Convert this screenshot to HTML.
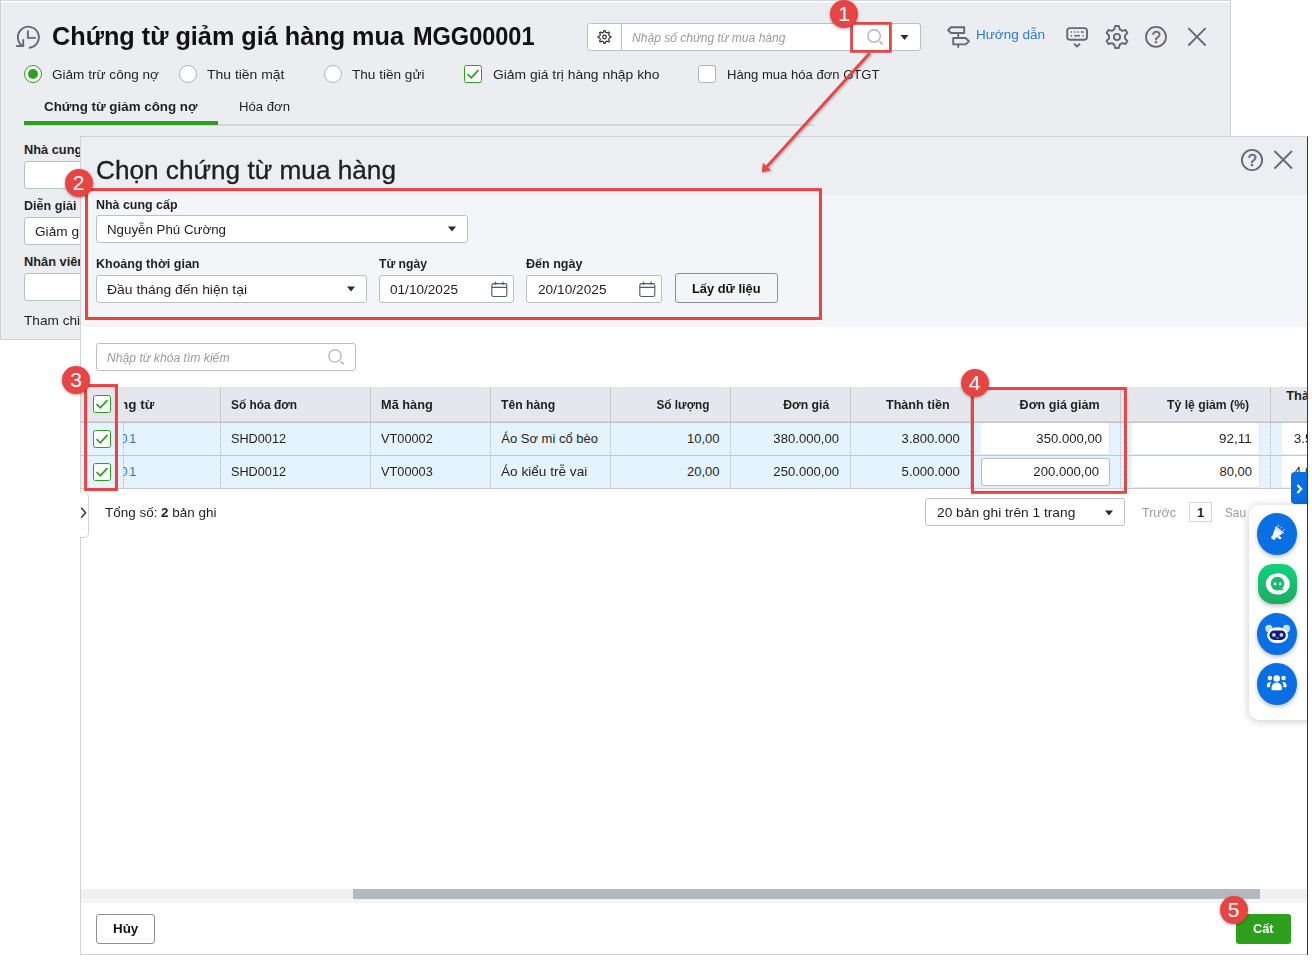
<!DOCTYPE html>
<html lang="vi"><head><meta charset="utf-8"><title>Chọn chứng từ mua hàng</title>
<style>
html,body{margin:0;padding:0;background:#fff;}
body{position:relative;width:1312px;height:961px;overflow:hidden;font-family:"Liberation Sans",sans-serif;}
.t{position:absolute;white-space:nowrap;line-height:20px;}
.b{position:absolute;box-sizing:border-box;}
svg{position:absolute;left:0;top:0;overflow:visible;}
</style></head><body>

<div class="b" style="left:0px;top:0px;width:1231px;height:340px;background:#ecedf1;border:1px solid #d0d1d4;border-top-color:#d8d8da;"></div>
<div class="b" style="left:1px;top:1px;width:1229px;height:1px;background:#fff;"></div>
<div class="b" style="left:1px;top:2px;width:1229px;height:1px;background:#f5f5f7;"></div>
<span class="t" id="title" style="top:26.49px;font-size:26px;font-weight:700;color:#111;transform:scaleX(0.9706);left:52.00px;transform-origin:0 50%;">Chứng từ giảm giá hàng mua</span>
<span class="t" id="title2" style="top:26.49px;font-size:26px;font-weight:700;color:#111;transform:scaleX(0.9040);left:413.00px;transform-origin:0 50%;">MGG00001</span>
<div class="b" style="left:24px;top:64.5px;width:18px;height:18px;border-radius:50%;background:#fff;border:1px solid #2ca01c;"><div class="b" style="left:3px;top:3px;width:10px;height:10px;border-radius:50%;background:#2ca01c;"></div></div>
<div class="b" style="left:179px;top:64.5px;width:18px;height:18px;border-radius:50%;background:#fff;border:1px solid #afb2b8;"></div>
<div class="b" style="left:324px;top:64.5px;width:18px;height:18px;border-radius:50%;background:#fff;border:1px solid #afb2b8;"></div>
<span class="t" id="r1" style="top:64.50px;font-size:13px;font-weight:400;color:#1f1f1f;transform:scaleX(1.0441);left:52.00px;transform-origin:0 50%;">Giảm trừ công nợ</span>
<span class="t" id="r2" style="top:64.50px;font-size:13px;font-weight:400;color:#1f1f1f;transform:scaleX(1.0724);left:207.00px;transform-origin:0 50%;">Thu tiền mặt</span>
<span class="t" id="r3" style="top:64.50px;font-size:13px;font-weight:400;color:#1f1f1f;transform:scaleX(1.0446);left:352.00px;transform-origin:0 50%;">Thu tiền gửi</span>
<div class="b" style="left:464px;top:65px;width:18px;height:18px;background:#fff;border:1px solid #2ca01c;border-radius:2.5px;"><svg width="18" height="18" viewBox="0 0 18 18" style="left:-1px;top:-1px"><path d="M3.6 9.2 L7.3 12.8 L14.4 5.2" fill="none" stroke="#2ca01c" stroke-width="1.8"/></svg></div>
<span class="t" id="c1" style="top:64.50px;font-size:13px;font-weight:400;color:#1f1f1f;transform:scaleX(1.0666);left:492.50px;transform-origin:0 50%;">Giảm giá trị hàng nhập kho</span>
<div class="b" style="left:698px;top:65px;width:18px;height:18px;background:#fff;border:1px solid #afb2b8;border-radius:3px;"></div>
<span class="t" id="c2" style="top:64.50px;font-size:13px;font-weight:400;color:#1f1f1f;transform:scaleX(1.0059);left:726.75px;transform-origin:0 50%;">Hàng mua hóa đơn GTGT</span>
<div class="b" style="left:24px;top:124px;width:790px;height:2px;background:#d2d5da;"></div>
<div class="b" style="left:24px;top:121px;width:194px;height:4px;background:#2ca01c;"></div>
<span class="t" id="tab1" style="top:96.76px;font-size:12.8px;font-weight:700;color:#1f1f1f;transform:scaleX(1.0438);left:44.00px;transform-origin:0 50%;">Chứng từ giảm công nợ</span>
<span class="t" id="tab2" style="top:96.70px;font-size:13px;font-weight:400;color:#1f1f1f;transform:scaleX(1.0108);left:239.00px;transform-origin:0 50%;">Hóa đơn</span>
<span class="t" id="f1" style="top:139.56px;font-size:12.8px;font-weight:700;color:#1f1f1f;left:24.00px;transform-origin:0 50%;">Nhà cung cấp</span>
<div class="b" style="left:24px;top:161px;width:300px;height:28px;background:#fff;border:1px solid #babec5;border-radius:3px;"></div>
<span class="t" id="f2" style="top:195.56px;font-size:12.8px;font-weight:700;color:#1f1f1f;transform:scaleX(0.9842);left:24.00px;transform-origin:0 50%;">Diễn giải</span>
<div class="b" style="left:24px;top:217px;width:300px;height:28px;background:#fff;border:1px solid #babec5;border-radius:3px;"></div>
<span class="t" id="f2v" style="top:221.80px;font-size:13px;font-weight:400;color:#1f1f1f;left:35.00px;transform-origin:0 50%;transform:scaleX(1.05);">Giảm giá hàng mua</span>
<span class="t" id="f3" style="top:251.56px;font-size:12.8px;font-weight:700;color:#1f1f1f;left:24.00px;transform-origin:0 50%;">Nhân viên mua hàng</span>
<div class="b" style="left:24px;top:273px;width:300px;height:28px;background:#fff;border:1px solid #babec5;border-radius:3px;"></div>
<span class="t" id="f4" style="top:310.50px;font-size:13px;font-weight:400;color:#1f1f1f;left:24.00px;transform-origin:0 50%;transform:scaleX(1.05);">Tham chiếu</span>
<div class="b" style="left:587px;top:23px;width:35px;height:28px;background:#fff;border:1px solid #babec5;border-radius:3px 0 0 3px;"></div>
<div class="b" style="left:621px;top:23px;width:300px;height:28px;background:#fff;border:1px solid #babec5;border-radius:0 3px 3px 0;"></div>
<span class="t" id="ph1" style="top:28.04px;font-size:12.3px;font-weight:400;color:#9b9b9e;transform:scaleX(0.9813);font-style:italic;left:632.00px;transform-origin:0 50%;">Nhập số chứng từ mua hàng</span>
<span class="t" id="hd" style="top:25.00px;font-size:13px;font-weight:400;color:#2b7cd0;transform:scaleX(1.0393);left:976.00px;transform-origin:0 50%;">Hướng dẫn</span>
<svg width="1312" height="340" viewBox="0 0 1312 340" fill="none" stroke="#66696f" stroke-width="1.7">
<g stroke-width="1.9"><path d="M28.9 47.7 A10.5 10.5 0 1 0 22.6 46"/><path d="M16.2 46 H23.2 V39.2"/><path d="M27.9 30.4 V37.9 H35.8"/></g>
<path d="M603.43 32.22 L603.94 30.52 L605.06 30.52 L605.57 32.22 L607.13 32.86 L608.68 32.02 L609.48 32.82 L608.64 34.37 L609.28 35.93 L610.98 36.44 L610.98 37.56 L609.28 38.07 L608.64 39.63 L609.48 41.18 L608.68 41.98 L607.13 41.14 L605.57 41.78 L605.06 43.48 L603.94 43.48 L603.43 41.78 L601.87 41.14 L600.32 41.98 L599.52 41.18 L600.36 39.63 L599.72 38.07 L598.02 37.56 L598.02 36.44 L599.72 35.93 L600.36 34.37 L599.52 32.82 L600.32 32.02 L601.87 32.86Z" stroke="#2e2e2e" stroke-width="1.15" stroke-linejoin="round"/><circle cx="604.5" cy="37" r="1.8" stroke="#2e2e2e" stroke-width="1.2"/>
<circle cx="874.1" cy="35.9" r="6.25" stroke="#bcbcbe" stroke-width="1.6"/><path d="M879.5 41.5 L882.7 44.4" stroke="#bcbcbe" stroke-width="1.9"/>
<path d="M900.5 35 H908.5 L904.5 40Z" fill="#2b2b2b" stroke="none"/>
<g stroke-width="1.9" stroke-linejoin="round"><path d="M951 27.2 H964.2 V33 H951 L948 30.1 Z"/><path d="M953.2 38 H965.6 L969 41.2 L965.6 44.4 H953.2 Z"/><path d="M958.2 33 V38 M958.2 44.4 V47.8"/></g>
<g stroke-width="1.9"><rect x="1067.2" y="28.1" width="19.8" height="11.6" rx="2.6"/><path d="M1070.6 32 h1.5 M1074 32 h1.5 M1077.4 32 h1.5 M1080.8 32 h1.5 M1082.3 32 h1.5 M1070.6 35.8 h1.5 M1074.2 35.8 h5.8 M1082.3 35.8 h1.5" stroke-width="1.6"/><path d="M1074 43.7 L1077 46.4 L1080 43.7"/></g>
<path d="M1114.30 29.36 L1115.21 26.05 L1118.79 26.05 L1119.70 29.36 L1122.26 30.84 L1125.59 29.97 L1127.38 33.08 L1124.96 35.52 L1124.96 38.48 L1127.38 40.92 L1125.59 44.03 L1122.26 43.16 L1119.70 44.64 L1118.79 47.95 L1115.21 47.95 L1114.30 44.64 L1111.74 43.16 L1108.41 44.03 L1106.62 40.92 L1109.04 38.48 L1109.04 35.52 L1106.62 33.08 L1108.41 29.97 L1111.74 30.84Z" stroke-width="1.9" stroke-linejoin="round"/><circle cx="1117" cy="37" r="3.1" stroke-width="1.9"/>
<circle cx="1156" cy="36.9" r="10" stroke-width="1.8"/>
<path d="M1188.3 28.2 L1205.6 45.5 M1205.6 28.2 L1188.3 45.5" stroke-width="1.8"/>
</svg>
<span class="t" id="q1" style="top:27.66px;font-size:16px;font-weight:400;color:#66696f;left:1056.10px;width:200px;text-align:center;-webkit-text-stroke:0.5px #66696f;">?</span>
<div class="b" style="left:80px;top:136px;width:1228px;height:819px;background:#fff;border:1px solid #d2d3d6;border-right:1.5px solid #33363f;"></div>
<div class="b" style="left:81px;top:137px;width:1225.5px;height:58px;background:#edeef2;"></div>
<div class="b" style="left:81px;top:194.5px;width:1225.5px;height:132.5px;background:#f4f5f8;"></div>
<span class="t" id="dt" style="top:159.94px;font-size:25px;font-weight:400;color:#1f1f1f;transform:scaleX(1.0473);left:96.00px;transform-origin:0 50%;-webkit-text-stroke:0.3px #1f1f1f;">Chọn chứng từ mua hàng</span>
<svg width="1312" height="340" viewBox="0 0 1312 340" fill="none" stroke="#66696f" stroke-width="1.7">
<circle cx="1252" cy="160" r="10.1" stroke-width="1.9"/><path d="M1274.5 151 L1292 168.5 M1292 151 L1274.5 168.5" stroke-width="1.8"/>
</svg>
<span class="t" id="q2" style="top:150.76px;font-size:16px;font-weight:400;color:#66696f;left:1152.10px;width:200px;text-align:center;-webkit-text-stroke:0.5px #66696f;">?</span>
<span class="t" id="l1" style="top:194.56px;font-size:12.8px;font-weight:700;color:#1f1f1f;transform:scaleX(0.9713);left:96.00px;transform-origin:0 50%;">Nhà cung cấp</span>
<div class="b" style="left:96px;top:215px;width:372px;height:28px;background:#fff;border:1px solid #babec5;border-radius:3px;"></div>
<span class="t" id="v1" style="top:220.00px;font-size:13px;font-weight:400;color:#1f1f1f;transform:scaleX(1.0237);left:107.00px;transform-origin:0 50%;">Nguyễn Phú Cường</span>
<svg width="10" height="6" viewBox="0 0 10 6" style="left:447px;top:226.3px"><path d="M1 0.5 H9 L5 5.5Z" fill="#2b2b2b"/></svg>
<span class="t" id="l2" style="top:254.06px;font-size:12.8px;font-weight:700;color:#1f1f1f;transform:scaleX(0.9784);left:96.00px;transform-origin:0 50%;">Khoảng thời gian</span>
<div class="b" style="left:96px;top:275px;width:271px;height:28px;background:#fff;border:1px solid #babec5;border-radius:3px;"></div>
<span class="t" id="v2" style="top:280.00px;font-size:13px;font-weight:400;color:#1f1f1f;transform:scaleX(1.0701);left:107.00px;transform-origin:0 50%;">Đầu tháng đến hiện tại</span>
<svg width="10" height="6" viewBox="0 0 10 6" style="left:346px;top:286.3px"><path d="M1 0.5 H9 L5 5.5Z" fill="#2b2b2b"/></svg>
<span class="t" id="l3" style="top:254.06px;font-size:12.8px;font-weight:700;color:#1f1f1f;transform:scaleX(0.9502);left:379.00px;transform-origin:0 50%;">Từ ngày</span>
<div class="b" style="left:379px;top:275px;width:135px;height:28px;background:#fff;border:1px solid #babec5;border-radius:3px;"></div>
<span class="t" id="v3" style="top:279.70px;font-size:13px;font-weight:400;color:#1f1f1f;transform:scaleX(1.0449);left:390.00px;transform-origin:0 50%;">01/10/2025</span>
<svg width="17" height="17" viewBox="0 0 17 17" style="left:490.5px;top:280.5px" fill="none" stroke="#55585e" stroke-width="1.1"><rect x="0.8" y="2.6" width="15" height="12.9" rx="1.8"/><path d="M0.8 6.4 H15.8 M4.6 0.6 V4 M12 0.6 V4"/></svg>
<span class="t" id="l4" style="top:254.06px;font-size:12.8px;font-weight:700;color:#1f1f1f;transform:scaleX(0.9807);left:526.00px;transform-origin:0 50%;">Đến ngày</span>
<div class="b" style="left:526px;top:275px;width:136px;height:28px;background:#fff;border:1px solid #babec5;border-radius:3px;"></div>
<span class="t" id="v4" style="top:279.70px;font-size:13px;font-weight:400;color:#1f1f1f;transform:scaleX(1.0526);left:537.50px;transform-origin:0 50%;">20/10/2025</span>
<svg width="17" height="17" viewBox="0 0 17 17" style="left:638.5px;top:280.5px" fill="none" stroke="#55585e" stroke-width="1.1"><rect x="0.8" y="2.6" width="15" height="12.9" rx="1.8"/><path d="M0.8 6.4 H15.8 M4.6 0.6 V4 M12 0.6 V4"/></svg>
<div class="b" style="left:675px;top:273px;width:103px;height:30px;background:#f4f5f8;border:1px solid #8d9096;border-radius:3px;"></div>
<span class="t" id="b1" style="top:278.56px;font-size:12.8px;font-weight:700;color:#111;transform:scaleX(1.0030);left:692.00px;transform-origin:0 50%;">Lấy dữ liệu</span>
<div class="b" style="left:96px;top:343px;width:260px;height:28px;background:#fff;border:1px solid #babec5;border-radius:3px;"></div>
<span class="t" id="ph2" style="top:347.84px;font-size:12px;font-weight:400;color:#9b9b9e;transform:scaleX(1.0125);font-style:italic;left:107.00px;transform-origin:0 50%;">Nhập từ khóa tìm kiếm</span>
<svg width="30" height="30" viewBox="0 0 30 30" style="left:321px;top:342px" fill="none" stroke="#c0c0c2" stroke-width="1.6"><circle cx="14" cy="13.9" r="6.15"/><path d="M19.5 19.4 L22.8 22.3" stroke-width="2"/></svg>
<div class="b" style="left:81px;top:387px;width:1225.5px;height:34px;background:#e5e7ec;"></div>
<div class="b" style="left:81px;top:421px;width:1225.5px;height:1px;background:#d2d2d5;"></div>
<div class="b" style="left:81px;top:422px;width:1225.5px;height:1px;background:#c4c3c3;"></div>
<div class="b" style="left:81px;top:423px;width:1225.5px;height:32px;background:#e5f3ff;"></div>
<div class="b" style="left:81px;top:455px;width:1225.5px;height:1px;background:#c5c6c8;"></div>
<div class="b" style="left:81px;top:456px;width:1225.5px;height:32px;background:#e5f3ff;"></div>
<div class="b" style="left:81px;top:488px;width:1225.5px;height:1px;background:#c9c9cb;"></div>
<div class="b" style="left:220px;top:387px;width:1px;height:35px;background:#c7c8ca;"></div>
<div class="b" style="left:220px;top:423px;width:0px;height:65px;border-left:1px dotted #b4b5b8;"></div>
<div class="b" style="left:370px;top:387px;width:1px;height:35px;background:#c7c8ca;"></div>
<div class="b" style="left:370px;top:423px;width:0px;height:65px;border-left:1px dotted #b4b5b8;"></div>
<div class="b" style="left:490px;top:387px;width:1px;height:35px;background:#c7c8ca;"></div>
<div class="b" style="left:490px;top:423px;width:0px;height:65px;border-left:1px dotted #b4b5b8;"></div>
<div class="b" style="left:610px;top:387px;width:1px;height:35px;background:#c7c8ca;"></div>
<div class="b" style="left:610px;top:423px;width:0px;height:65px;border-left:1px dotted #b4b5b8;"></div>
<div class="b" style="left:730px;top:387px;width:1px;height:35px;background:#c7c8ca;"></div>
<div class="b" style="left:730px;top:423px;width:0px;height:65px;border-left:1px dotted #b4b5b8;"></div>
<div class="b" style="left:850px;top:387px;width:1px;height:35px;background:#c7c8ca;"></div>
<div class="b" style="left:850px;top:423px;width:0px;height:65px;border-left:1px dotted #b4b5b8;"></div>
<div class="b" style="left:970px;top:387px;width:1px;height:35px;background:#c7c8ca;"></div>
<div class="b" style="left:970px;top:423px;width:0px;height:65px;border-left:1px dotted #b4b5b8;"></div>
<div class="b" style="left:1120px;top:387px;width:1px;height:35px;background:#c7c8ca;"></div>
<div class="b" style="left:1120px;top:423px;width:0px;height:65px;border-left:1px dotted #b4b5b8;"></div>
<div class="b" style="left:1270px;top:387px;width:1px;height:35px;background:#c7c8ca;"></div>
<div class="b" style="left:1270px;top:423px;width:0px;height:65px;border-left:1px dotted #b4b5b8;"></div>
<div class="b" style="left:123px;top:423px;width:0px;height:65px;border-left:1px dotted #b4b5b8;"></div>
<div class="b" style="left:93px;top:395px;width:18px;height:18px;background:#fff;border:1px solid #2ca01c;border-radius:2.5px;"><svg width="18" height="18" viewBox="0 0 18 18" style="left:-1px;top:-1px"><path d="M3.6 9.2 L7.3 12.8 L14.4 5.2" fill="none" stroke="#2ca01c" stroke-width="1.8"/></svg></div>
<div class="b" style="left:93px;top:430px;width:18px;height:18px;background:#fff;border:1px solid #2ca01c;border-radius:2.5px;"><svg width="18" height="18" viewBox="0 0 18 18" style="left:-1px;top:-1px"><path d="M3.6 9.2 L7.3 12.8 L14.4 5.2" fill="none" stroke="#2ca01c" stroke-width="1.8"/></svg></div>
<div class="b" style="left:93px;top:463px;width:18px;height:18px;background:#fff;border:1px solid #2ca01c;border-radius:2.5px;"><svg width="18" height="18" viewBox="0 0 18 18" style="left:-1px;top:-1px"><path d="M3.6 9.2 L7.3 12.8 L14.4 5.2" fill="none" stroke="#2ca01c" stroke-width="1.8"/></svg></div>
<span class="t" id="h0" style="top:394.76px;font-size:12.8px;font-weight:700;color:#1f1f1f;transform:scaleX(1.0514);left:119.60px;transform-origin:0 50%;clip-path:inset(0 0 0 3.6px);">ng từ</span>
<span class="t" id="h1" style="top:394.76px;font-size:12.8px;font-weight:700;color:#1f1f1f;transform:scaleX(0.9302);left:231.00px;transform-origin:0 50%;">Số hóa đơn</span>
<span class="t" id="h2" style="top:394.76px;font-size:12.8px;font-weight:700;color:#1f1f1f;transform:scaleX(0.9970);left:381.25px;transform-origin:0 50%;">Mã hàng</span>
<span class="t" id="h3" style="top:394.76px;font-size:12.8px;font-weight:700;color:#1f1f1f;transform:scaleX(0.9538);left:501.25px;transform-origin:0 50%;">Tên hàng</span>
<span class="t" id="h4" style="top:394.76px;font-size:12.8px;font-weight:700;color:#1f1f1f;transform:scaleX(0.9222);right:602.50px;transform-origin:100% 50%;">Số lượng</span>
<span class="t" id="h5" style="top:394.76px;font-size:12.8px;font-weight:700;color:#1f1f1f;transform:scaleX(0.9543);right:482.50px;transform-origin:100% 50%;">Đơn giá</span>
<span class="t" id="h6" style="top:394.76px;font-size:12.8px;font-weight:700;color:#1f1f1f;transform:scaleX(0.9853);right:362.50px;transform-origin:100% 50%;">Thành tiền</span>
<span class="t" id="h7" style="top:394.76px;font-size:12.8px;font-weight:700;color:#1f1f1f;transform:scaleX(0.9801);right:212.00px;transform-origin:100% 50%;">Đơn giá giảm</span>
<span class="t" id="h8" style="top:394.76px;font-size:12.8px;font-weight:700;color:#1f1f1f;transform:scaleX(0.9530);right:62.50px;transform-origin:100% 50%;">Tỷ lệ giảm (%)</span>
<span class="t" id="h9" style="top:385.56px;font-size:12.8px;font-weight:700;color:#1f1f1f;left:1286.30px;transform-origin:0 50%;">Thành tiền giảm</span>
<div class="b" style="left:981.3px;top:423.4px;width:128.2px;height:30.6px;background:#fff;border-radius:1.5px;box-shadow:0.5px 0.5px 0 #dcdfe3;"></div>
<div class="b" style="left:981.3px;top:458.1px;width:128.4px;height:28.1px;background:#fff;border:1px solid #b7bcc6;border-radius:2px;"></div>
<div class="b" style="left:1131.5px;top:423.4px;width:127.5px;height:30.6px;background:#fff;border-radius:1.5px;box-shadow:0.5px 0.5px 0 #dcdfe3;"></div>
<div class="b" style="left:1131.5px;top:456.4px;width:127.5px;height:30.6px;background:#fff;border-radius:1.5px;box-shadow:0.5px 0.5px 0 #dcdfe3;"></div>
<div class="b" style="left:1281.8px;top:423.4px;width:40px;height:31px;background:#fff;border-radius:1.5px;"></div>
<div class="b" style="left:1281.8px;top:456.4px;width:40px;height:31px;background:#fff;border-radius:1.5px;"></div>
<span class="t" id="a00" style="top:428.70px;font-size:13px;font-weight:400;color:#2b7cd0;left:120.20px;transform-origin:0 50%;letter-spacing:1.6px;clip-path:inset(0 0 0 3px);">01</span>
<span class="t" id="a01" style="top:428.70px;font-size:13px;font-weight:400;color:#1f1f1f;transform:scaleX(0.9756);left:231.00px;transform-origin:0 50%;">SHD0012</span>
<span class="t" id="a02" style="top:428.70px;font-size:13px;font-weight:400;color:#1f1f1f;transform:scaleX(0.9808);left:381.25px;transform-origin:0 50%;">VT00002</span>
<span class="t" id="a03" style="top:428.70px;font-size:13px;font-weight:400;color:#1f1f1f;left:501.25px;transform-origin:0 50%;">Áo Sơ mi cổ bèo</span>
<span class="t" id="a04" style="top:428.70px;font-size:13px;font-weight:400;color:#1f1f1f;right:592.50px;transform-origin:100% 50%;">10,00</span>
<span class="t" id="a05" style="top:428.70px;font-size:13px;font-weight:400;color:#1f1f1f;transform:scaleX(1.0103);right:472.50px;transform-origin:100% 50%;">380.000,00</span>
<span class="t" id="a06" style="top:428.70px;font-size:13px;font-weight:400;color:#1f1f1f;transform:scaleX(1.0070);right:352.50px;transform-origin:100% 50%;">3.800.000</span>
<span class="t" id="a07" style="top:428.70px;font-size:13px;font-weight:400;color:#1f1f1f;transform:scaleX(1.0103);right:209.50px;transform-origin:100% 50%;">350.000,00</span>
<span class="t" id="a08" style="top:428.70px;font-size:13px;font-weight:400;color:#1f1f1f;transform:scaleX(1.0292);right:60.00px;transform-origin:100% 50%;">92,11</span>
<span class="t" id="a09" style="top:428.70px;font-size:13px;font-weight:400;color:#1f1f1f;transform:scaleX(1.0070);left:1294.00px;transform-origin:0 50%;">3.500.000</span>
<span class="t" id="a10" style="top:461.70px;font-size:13px;font-weight:400;color:#2b7cd0;left:120.20px;transform-origin:0 50%;letter-spacing:1.6px;clip-path:inset(0 0 0 3px);">01</span>
<span class="t" id="a11" style="top:461.70px;font-size:13px;font-weight:400;color:#1f1f1f;transform:scaleX(0.9756);left:231.00px;transform-origin:0 50%;">SHD0012</span>
<span class="t" id="a12" style="top:461.70px;font-size:13px;font-weight:400;color:#1f1f1f;transform:scaleX(0.9808);left:381.25px;transform-origin:0 50%;">VT00003</span>
<span class="t" id="a13" style="top:461.70px;font-size:13px;font-weight:400;color:#1f1f1f;transform:scaleX(1.0470);left:501.25px;transform-origin:0 50%;">Áo kiểu trễ vai</span>
<span class="t" id="a14" style="top:461.70px;font-size:13px;font-weight:400;color:#1f1f1f;right:592.50px;transform-origin:100% 50%;">20,00</span>
<span class="t" id="a15" style="top:461.70px;font-size:13px;font-weight:400;color:#1f1f1f;transform:scaleX(1.0103);right:472.50px;transform-origin:100% 50%;">250.000,00</span>
<span class="t" id="a16" style="top:461.70px;font-size:13px;font-weight:400;color:#1f1f1f;transform:scaleX(1.0070);right:352.50px;transform-origin:100% 50%;">5.000.000</span>
<span class="t" id="a17" style="top:461.70px;font-size:13px;font-weight:400;color:#1f1f1f;transform:scaleX(1.0103);right:212.75px;transform-origin:100% 50%;">200.000,00</span>
<span class="t" id="a18" style="top:461.70px;font-size:13px;font-weight:400;color:#1f1f1f;right:60.00px;transform-origin:100% 50%;">80,00</span>
<span class="t" id="a19" style="top:461.70px;font-size:13px;font-weight:400;color:#1f1f1f;transform:scaleX(1.0070);left:1294.00px;transform-origin:0 50%;">4.000.000</span>
<span class="t" id="tot" style="top:502.50px;font-size:13px;font-weight:400;color:#1f1f1f;transform:scaleX(1.0353);left:104.50px;transform-origin:0 50%;">Tổng số: <b>2</b> bản ghi</span>
<div class="b" style="left:925px;top:498px;width:200px;height:28px;background:#fff;border:1px solid #babec5;border-radius:3px;"></div>
<span class="t" id="pg" style="top:502.50px;font-size:13px;font-weight:400;color:#1f1f1f;transform:scaleX(1.0571);left:936.70px;transform-origin:0 50%;">20 bản ghi trên 1 trang</span>
<svg width="10" height="6" viewBox="0 0 10 6" style="left:1104px;top:509.79999999999995px"><path d="M1 0.5 H9 L5 5.5Z" fill="#2b2b2b"/></svg>
<span class="t" id="prev" style="top:502.63px;font-size:12.6px;font-weight:400;color:#9b9b9b;transform:scaleX(0.9882);left:1142.00px;transform-origin:0 50%;">Trước</span>
<div class="b" style="left:1189.3px;top:502.3px;width:22.3px;height:19.5px;background:#fff;border:1px solid #d5d6d9;"></div>
<span class="t" id="p1" style="top:502.56px;font-size:12.8px;font-weight:700;color:#1f1f1f;left:1100.60px;width:200px;text-align:center;">1</span>
<span class="t" id="next" style="top:502.70px;font-size:12.4px;font-weight:400;color:#9b9b9b;transform:scaleX(0.9525);left:1225.00px;transform-origin:0 50%;">Sau</span>
<div class="b" style="left:80px;top:492px;width:8.6px;height:46px;background:#fff;border:1px solid #d2d3d6;border-left:none;border-top-color:#e4e5e8;border-radius:0 5px 5px 0;"></div>
<svg width="10" height="14" viewBox="0 0 10 14" style="left:80px;top:506px" fill="none" stroke="#3a3a3a" stroke-width="1.6"><path d="M1.2 1.8 L5.6 6.8 L1.2 11.8"/></svg>
<div class="b" style="left:81px;top:889px;width:1225.5px;height:10px;background:#f0f0f0;"></div>
<div class="b" style="left:81px;top:899px;width:1225.5px;height:4px;background:#f4f5f8;"></div>
<div class="b" style="left:353px;top:889px;width:907px;height:10px;background:#b4b8c1;"></div>
<div class="b" style="left:96px;top:914px;width:58.5px;height:30px;background:#fff;border:1px solid #8d9096;border-radius:3px;"></div>
<span class="t" id="hu" style="top:919.36px;font-size:12.8px;font-weight:700;color:#111;transform:scaleX(1.0439);left:113.25px;transform-origin:0 50%;">Hủy</span>
<div class="b" style="left:1236px;top:914px;width:55px;height:30px;background:#2ca01c;border-radius:3px;"></div>
<span class="t" id="cat" style="top:919.36px;font-size:12.8px;font-weight:700;color:#fff;transform:scaleX(0.9939);left:1253.00px;transform-origin:0 50%;">Cất</span>
<div class="b" style="left:1291px;top:472px;width:16px;height:32px;background:#0a6fe3;border-radius:4px 0 0 4px;"></div>
<svg width="10" height="12" viewBox="0 0 10 12" style="left:1294.5px;top:482.5px" fill="none" stroke="#fff" stroke-width="2.1"><path d="M2.4 2 L6.2 6 L2.4 10"/></svg>
<div class="b" style="left:1248.7px;top:504.8px;width:80px;height:215.5px;background:#fff;border-radius:10px;box-shadow:0 1px 8px rgba(0,0,0,0.22);"></div>
<div class="b" style="left:1257.3px;top:513.15px;width:40px;height:41.5px;background:#0a6fe3;border-radius:50%;box-shadow:0 2px 4px rgba(0,0,0,0.25);"><svg width="40" height="40" viewBox="0 0 41 41"><g transform="translate(20 21.2) rotate(-52) scale(0.84)" fill="#fff"><path d="M-4.2 -2.6 L4.6 -5.6 V5.6 L-4.2 2.6Z"/><rect x="4.9" y="-6.4" width="1.7" height="12.8" rx="0.8"/><rect x="-8.2" y="-2.6" width="4.4" height="5.2" rx="1.2"/><path d="M-3.4 3.2 L0.2 4.4 L-0.2 7.6 Q-1.8 8.8 -3 7.4Z"/><path d="M8.4 0 h2.6 M7.8 -3.4 l2.2 -1.5 M7.8 3.4 l2.2 1.5" stroke="#fff" stroke-width="0.8"/></g></svg></div>
<div class="b" style="left:1257.5px;top:564.2px;width:39.6px;height:39.6px;background:linear-gradient(#12d27d,#1fab64);border-radius:15px;box-shadow:0 2px 4px rgba(0,0,0,0.25);"><svg width="39.6" height="39.6" viewBox="0 0 41 41"><ellipse cx="20.5" cy="20.6" rx="12.4" ry="11" fill="#fff"/><circle cx="20.2" cy="20.3" r="7.1" fill="#19bd70"/><path d="M24 25 L27.6 27.4 L22.4 27Z" fill="#19bd70"/><circle cx="17.6" cy="20.6" r="1.4" fill="#fff"/><circle cx="22.9" cy="20.6" r="1.4" fill="#fff"/></svg></div>
<div class="b" style="left:1257.3px;top:613.15px;width:40px;height:41.5px;background:#0a6fe3;border-radius:50%;box-shadow:0 2px 4px rgba(0,0,0,0.25);"><svg width="40" height="40" viewBox="0 0 41 41"><circle cx="12.2" cy="15.8" r="3.7" fill="#c4e1fb"/><circle cx="30.2" cy="15.8" r="3.7" fill="#c4e1fb"/><ellipse cx="21.1" cy="22.8" rx="10.8" ry="8.3" fill="#fff"/><rect x="12.8" y="17.9" width="16.8" height="9.8" rx="4.9" fill="#101c7a"/><circle cx="17.3" cy="22.5" r="1.9" fill="#c9d6e6"/><circle cx="25" cy="22.5" r="1.9" fill="#c9d6e6"/><path d="M19.8 25.2 Q21.1 26.4 22.4 25.2" stroke="#fff" stroke-width="0.6" fill="none"/></svg></div>
<div class="b" style="left:1257.3px;top:663.15px;width:40px;height:41.5px;background:#0a6fe3;border-radius:50%;box-shadow:0 2px 4px rgba(0,0,0,0.25);"><svg width="40" height="40" viewBox="0 0 41 41" fill="#fff"><circle cx="20.2" cy="15.8" r="3.3"/><path d="M14.8 26.6 Q14.8 19.9 20.2 19.9 Q25.6 19.9 25.6 26.6 Q25.6 27.9 24 27.9 H16.4 Q14.8 27.9 14.8 26.6Z"/><circle cx="13.2" cy="15.4" r="2.3"/><circle cx="27.2" cy="15.4" r="2.3"/><path d="M10 23.6 Q10 19.2 14.6 19.4 Q12.8 21.6 13.2 24.8 H11 Q10 24.8 10 23.6Z"/><path d="M30.4 23.6 Q30.4 19.2 25.8 19.4 Q27.6 21.6 27.2 24.8 H29.4 Q30.4 24.8 30.4 23.6Z"/></svg></div>
<div class="b" style="left:1306.5px;top:136.5px;width:1.6px;height:818.5px;background:#33363f;"></div>
<div class="b" style="left:1308.1px;top:0px;width:4px;height:961px;background:#fff;"></div>
<svg width="1312" height="961" viewBox="0 0 1312 961" fill="none" stroke="#e74444" stroke-width="3.05">
<rect x="851.55" y="23.4" width="38.85" height="28" stroke-width="2.8"/>
<rect x="86.5" y="189.6" width="733.95" height="128.9"/>
<rect x="85.6" y="385.6" width="30.85" height="103.85"/>
<rect x="972.45" y="388.55" width="153" height="103.8"/>
<g style="filter:drop-shadow(1px 1px 1px rgba(0,0,0,0.3))"><path d="M869.8 53 L766.6 166.9" stroke-width="2.7"/><path d="M761.7 172.2 L762.9 162.9 L771 170.2 Z" fill="#e74444" stroke="none"/></g>
</svg>
<div class="b" style="left:830.2px;top:0.1999999999999993px;width:28px;height:28px;background:#e74444;border-radius:50%;box-shadow:0 1px 3px rgba(0,0,0,0.35);"></div>
<span class="t" id="bd1" style="top:4.22px;font-size:21px;font-weight:400;color:#fff;left:744.20px;width:200px;text-align:center;">1</span>
<div class="b" style="left:64.5px;top:169.4px;width:28px;height:28px;background:#e74444;border-radius:50%;box-shadow:0 1px 3px rgba(0,0,0,0.35);"></div>
<span class="t" id="bd2" style="top:173.42px;font-size:21px;font-weight:400;color:#fff;left:-21.50px;width:200px;text-align:center;">2</span>
<div class="b" style="left:62px;top:366px;width:28px;height:28px;background:#e74444;border-radius:50%;box-shadow:0 1px 3px rgba(0,0,0,0.35);"></div>
<span class="t" id="bd3" style="top:370.02px;font-size:21px;font-weight:400;color:#fff;left:-24.00px;width:200px;text-align:center;">3</span>
<div class="b" style="left:960.5px;top:368.6px;width:28px;height:28px;background:#e74444;border-radius:50%;box-shadow:0 1px 3px rgba(0,0,0,0.35);"></div>
<span class="t" id="bd4" style="top:372.62px;font-size:21px;font-weight:400;color:#fff;left:874.50px;width:200px;text-align:center;">4</span>
<div class="b" style="left:1219.6px;top:896.4px;width:28px;height:28px;background:#e74444;border-radius:50%;box-shadow:0 1px 3px rgba(0,0,0,0.35);"></div>
<span class="t" id="bd5" style="top:900.42px;font-size:21px;font-weight:400;color:#fff;left:1133.60px;width:200px;text-align:center;">5</span>
</body></html>
